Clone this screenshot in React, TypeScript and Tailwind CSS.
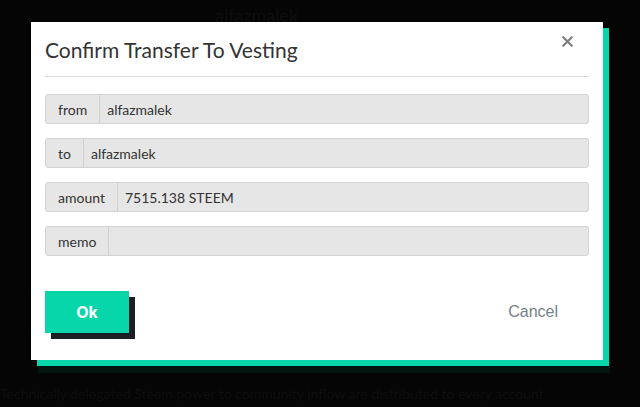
import { X } from "lucide-react";

const rows = [
  { label: "from", value: "alfazmalek" },
  { label: "to", value: "alfazmalek" },
  { label: "amount", value: "7515.138 STEEM" },
  { label: "memo", value: "" },
];

export default function App() {
  return (
    <div className="relative w-[640px] h-[407px] overflow-hidden bg-[#050505] font-['Lato',sans-serif]">
      {/* dimmed page behind the overlay */}
      <div className="absolute left-[215px] top-[2px] text-[18px] text-[#0d0d0d]">alfazmalek</div>
      <div className="absolute left-0 top-[383px] text-[14px] text-[#0e0e0e]">
        Technically delegated Steem power to community inflow are distributed to every account
      </div>

      <div className="relative pt-[22px] pl-[31px]">
        <div className="w-[572px] h-[338px] bg-white px-[14px] flex flex-col shadow-[6px_6px_0_#06d6a9,7px_13px_0_#03150f]">
          {/* Header */}
          <div className="relative h-[55px] flex items-center border-b border-[#dcdcdc]">
            <h2 className="text-[21px] text-[#333] leading-none pt-[1px]">Confirm Transfer To Vesting</h2>
            <button className="absolute right-[13px] top-[11px] text-[#808080]">
              <X className="w-[17px] h-[17px]" strokeWidth={3.2} />
            </button>
          </div>

          {/* Fields */}
          <div className="mt-[17px] flex flex-col gap-[14px]">
            {rows.map((row) => (
              <div
                key={row.label}
                className="flex h-[30px] rounded-[3px] border border-[#d3d3d3] bg-[#e6e6e6] text-[14px] text-[#333]"
              >
                <div className="flex items-center px-[12px] border-r border-[#d0d0d0]">{row.label}</div>
                <div className="flex items-center pl-[7px]">{row.value}</div>
              </div>
            ))}
          </div>

          {/* Actions */}
          <div className="mt-[35px] flex items-center justify-between">
            <button className="w-[84px] h-[42px] bg-[#06d6a9] text-white font-bold text-[16px] shadow-[6px_6px_0_#1b1f23] font-['Inter',sans-serif]">
              Ok
            </button>
            <button className="mr-[31px] text-[16px] text-[#788187] font-['Liberation_Sans',sans-serif]">
              Cancel
            </button>
          </div>
        </div>
      </div>
    </div>
  );
}
